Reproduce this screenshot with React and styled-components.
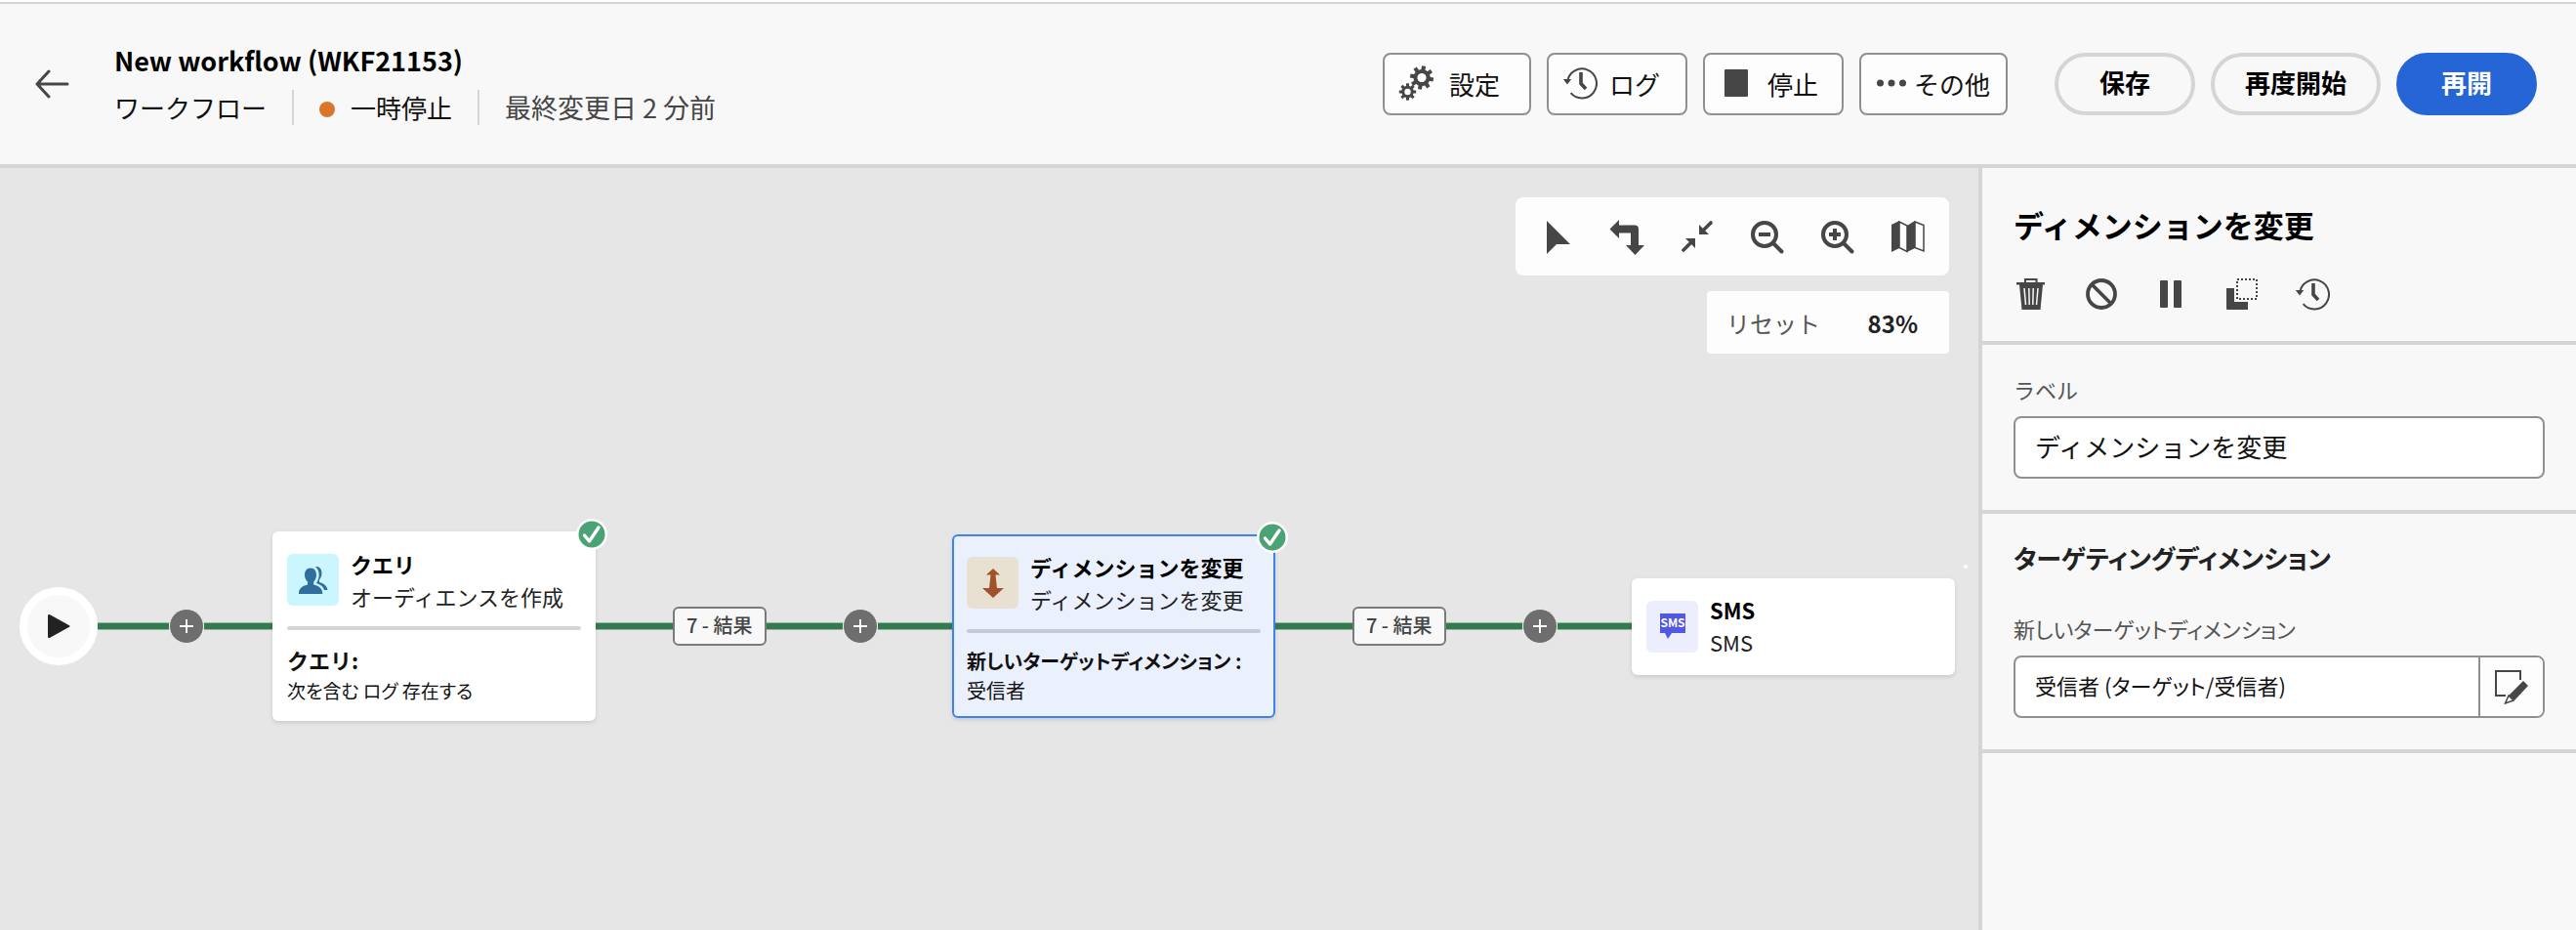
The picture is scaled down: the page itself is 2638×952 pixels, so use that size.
import React from 'react';
import styled, { createGlobalStyle, css } from 'styled-components';

const ink = '#464646';

const GlobalStyle = createGlobalStyle`
  *, *::before, *::after { box-sizing: border-box; }
  html, body, #root { height: 100%; }
  body {
    margin: 0;
    background: #e6e6e6;
    color: #000;
    font-family: 'Noto Sans CJK JP', 'Noto Sans', sans-serif;
    font-size: 26px;
  }
  button, input { font: inherit; color: inherit; }
  h1, h2, h3, p { margin: 0; }
  svg { display: block; flex: none; }
`;

const Page = styled.div`
  min-height: 100%;
  display: flex;
  flex-direction: column;
  border-top: 2px solid #fff;
`;

const Header = styled.header`
  display: flex;
  align-items: center;
  height: 170px;
  padding: 0 40px 0 36px;
  background: #f8f8f8;
  border-top: 2px solid #d5d5d5;
  border-bottom: 4px solid #d5d5d5;
`;

const IconButton = styled.button`
  display: flex;
  align-items: center;
  justify-content: center;
  width: 36px;
  height: 36px;
  padding: 0;
  border: 0;
  background: none;
  color: ${ink};
  cursor: pointer;
`;

const Heading = styled.div`
  flex: 1;
  min-width: 0;
  margin-left: 45px;
`;

const Title = styled.h1`
  font-size: 27px;
  font-weight: 700;
  line-height: 48px;
  white-space: nowrap;
`;

const Meta = styled.div`
  display: flex;
  align-items: center;
  height: 48px;
  line-height: 36px;
  white-space: nowrap;
`;

const MetaItem = styled.span`
  display: flex;
  align-items: center;
  gap: 16px;
  font-size: ${(p) => (p.$muted ? 27 : 26)}px;
  color: ${(p) => (p.$muted ? ink : '#111')};

  & + & {
    margin-left: 26px;
    padding-left: 26px;
    border-left: 2px solid #d5d5d5;
  }
`;

const StatusDot = styled.span`
  width: 16px;
  height: 16px;
  margin-top: 4px;
  border-radius: 50%;
  background: #da762b;
`;

const Actions = styled.div`
  display: flex;
  gap: 16px;
`;

const ToolButton = styled.button`
  display: flex;
  align-items: center;
  gap: ${(p) => p.$gap || 16}px;
  height: 64px;
  padding: 0 ${(p) => p.$end || 30}px 2px ${(p) => p.$start || 14}px;
  border: 2px solid #909090;
  border-radius: 8px;
  background: #fdfdfd;
  color: #111;
  white-space: nowrap;

  svg { color: ${ink}; }
`;

const PillButton = styled.button`
  height: 64px;
  padding: 0 ${(p) => p.$pad || 42}px 6px;
  border: 4px solid ${(p) => (p.$primary ? '#2565d6' : '#d5d5d5')};
  border-radius: 32px;
  background: ${(p) => (p.$primary ? '#2565d6' : '#f8f8f8')};
  color: ${(p) => (p.$primary ? '#fff' : '#000')};
  font-weight: 700;
  white-space: nowrap;

  ${(p) => p.$first && css`margin-left: 32px;`}
`;

const Body = styled.div`
  flex: 1;
  display: flex;
`;

const Canvas = styled.main`
  flex: 1;
  min-width: 0;
  display: flex;
  flex-direction: column;
  padding-top: 30px;
`;

const Controls = styled.div`
  display: flex;
  flex-direction: column;
  align-items: flex-end;
  gap: 16px;
  padding-right: 30px;
`;

const Toolbar = styled.div`
  display: flex;
  align-items: center;
  gap: 36px;
  height: 80px;
  padding: 2px 24px 0;
  border-radius: 8px;
  background: #fdfdfd;
`;

const ZoomBox = styled.div`
  display: flex;
  align-items: center;
  justify-content: space-between;
  width: 248px;
  height: 64px;
  padding: 0 32px 0 20px;
  border-radius: 4px;
  background: #fdfdfd;
  color: #222;
`;

const ResetButton = styled.button`
  padding: 0;
  border: 0;
  background: none;
  color: #555;
  font-size: 24px;
`;

const ZoomValue = styled.strong`
  font-size: 24px;
`;

const Flow = styled.div`
  display: flex;
  align-items: center;
  height: 196px;
  margin-top: 181px;
  padding-left: 20px;
`;

const StartNode = styled.div`
  flex: none;
  display: flex;
  align-items: center;
  justify-content: center;
  width: 80px;
  height: 80px;
  border: 8px solid #fff;
  border-radius: 50%;
  background: #f8f8f8;
  color: #222;
`;

const EdgeRow = styled.div`
  flex: none;
  display: flex;
  align-items: center;
  width: ${(p) => p.$width}px;
`;

const Line = styled.span`
  flex: ${(p) => p.$grow || 76};
  height: 8px;
  background: #337a4f;
  border: solid #8fb8a0;
  border-width: 1px 0;
`;

const EdgeLabel = styled.span`
  flex: none;
  display: flex;
  align-items: center;
  justify-content: center;
  width: 96px;
  height: 40px;
  padding-bottom: 2px;
  border: 2px solid #7a7a7a;
  border-radius: 6px;
  background: #f8f8f8;
  color: #444;
  font-size: 20px;
  font-weight: 500;
  line-height: 28px;
  white-space: nowrap;
`;

const AddButton = styled.button`
  flex: none;
  display: flex;
  align-items: center;
  justify-content: center;
  width: 36px;
  height: 36px;
  padding: 0;
  border: 1px solid #eee;
  border-radius: 50%;
  background: #6e6e6e;
  color: #fff;
`;

const CardHead = styled.div`
  display: flex;
  align-items: center;
  gap: 12px;
`;

const CardIcon = styled.div`
  flex: none;
  display: flex;
  align-items: center;
  justify-content: center;
  width: 53px;
  height: 53px;
  border-radius: 6px;
  background: ${(p) => p.$bg};
`;

const CardTitles = styled.div`
  height: 53px;
  margin-top: -13px;
  font-size: 22px;
  line-height: 33px;
  white-space: nowrap;
  color: #222;

  h3 { font-size: 22px; color: #000; }
`;

const CardRule = styled.hr`
  height: 4px;
  margin: 21px 0 14px;
  border: 0;
  border-radius: 2px;
  background: #d5d5d5;
`;

const CardDetail = styled.p`
  font-size: ${(p) => p.$size || 20}px;
  font-weight: ${(p) => (p.$bold ? 700 : 400)};
  font-feature-settings: ${(p) => (p.$tight ? "'palt'" : 'normal')};
  line-height: 32px;
  color: #111;
  white-space: nowrap;
`;

const Badge = styled.span`
  position: absolute;
  top: -13px;
  right: -12px;
`;

const EmptyBadge = styled.span`
  position: absolute;
  top: -14px;
  right: -13px;
  width: 4px;
  height: 4px;
  border-radius: 50%;
  background: #fff;
`;

const Card = styled.article`
  position: relative;
  flex: none;
  width: 331px;
  padding: ${(p) => (p.$compact ? '23px 15px' : '23px 15px 15px')};
  border-radius: 6px;
  background: #fff;
  box-shadow: 0 2px 4px rgba(0, 0, 0, 0.12);

  ${(p) => p.$selected && css`
    padding: 21px 13px 11px;
    border: 2px solid #3f82ee;
    background: #ebf0fd;

    ${CardRule} { background: #c5cad8; }
    ${CardDetail} { line-height: 30px; }
    ${Badge} { top: -15px; right: -15px; }
  `}
`;

const Side = styled.aside`
  flex: none;
  width: 612px;
  border-left: 4px solid #d5d5d5;
  background: #f8f8f8;
`;

const Section = styled.section`
  padding: ${(p) => p.$pad};
  border-bottom: 4px solid #d5d5d5;
`;

const SideTitle = styled.h2`
  font-size: 31px;
  line-height: 44px;
  white-space: nowrap;
`;

const SideActions = styled.div`
  display: flex;
  gap: 36px;
  margin-top: 31px;
`;

const SectionTitle = styled.h3`
  margin-bottom: 36px;
  font-size: 26px;
  font-feature-settings: 'palt';
  line-height: 40px;
  color: #222;
`;

const FieldLabel = styled.label`
  display: block;
  margin-bottom: 12px;
  font-size: 22px;
  line-height: 32px;
  color: #555;
  font-feature-settings: ${(p) => (p.$tight ? "'palt'" : 'normal')};
`;

const Field = styled.div`
  display: flex;
  height: 64px;
  border: 2px solid #909090;
  border-radius: 8px;
  background: #fff;
  overflow: hidden;
`;

const TextInput = styled.input`
  flex: 1;
  min-width: 0;
  padding: 0 20px 4px;
  border: 0;
  outline: 0;
  background: none;
  color: #111;
  font-size: ${(p) => (p.$tight ? 22 : 26)}px;
  font-feature-settings: ${(p) => (p.$tight ? "'palt'" : 'normal')};
`;

const FieldButton = styled.button`
  flex: none;
  display: flex;
  align-items: center;
  justify-content: center;
  width: 66px;
  padding: 0;
  border: 0;
  border-left: 2px solid #909090;
  background: #fdfdfd;
  color: ${ink};
`;

const Svg = ({ size = 36, children, ...rest }) => (
  <svg width={size} height={size} viewBox="0 0 36 36" fill="currentColor" aria-hidden="true" {...rest}>
    {children}
  </svg>
);

const Gear = ({ cx, cy, r, hole, tooth, turn = 0 }) => (
  <g transform={`translate(${cx} ${cy}) rotate(${turn})`}>
    {[0, 45, 90, 135, 180, 225, 270, 315].map((a) => (
      <rect key={a} x={-tooth / 2} y={-r * 1.4} width={tooth} height={r * 0.7} transform={`rotate(${a})`} />
    ))}
    <circle r={(r + hole) / 2} fill="none" stroke="currentColor" strokeWidth={r - hole} />
  </g>
);

const GearsIcon = () => (
  <Svg>
    <Gear cx={24} cy={12.5} r={8.6} hole={4.6} tooth={4} turn={10} />
    <Gear cx={9.5} cy={27} r={6.2} hole={3.2} tooth={3} />
  </Svg>
);

const HistoryIcon = () => (
  <Svg>
    <path d="M5.2 16A15 15 0 1 1 8.6 28.2" fill="none" stroke="currentColor" strokeWidth="2" />
    <path d="M0.8 14h8.4L5 19.500z" />
    <path d="M19 7v11.500l5 5.500" fill="none" stroke="currentColor" strokeWidth="3.600" />
  </Svg>
);

const StopIcon = () => (
  <svg width="24" height="28" viewBox="0 0 24 28" fill="currentColor" aria-hidden="true">
    <rect width="24" height="28" rx="1" />
  </svg>
);

const DotsIcon = () => (
  <svg width="30" height="8" viewBox="0 0 30 8" fill="currentColor" aria-hidden="true">
    <circle cx="3.5" cy="4" r="3.5" />
    <circle cx="15" cy="4" r="3.5" />
    <circle cx="26.5" cy="4" r="3.5" />
  </svg>
);

const BackIcon = () => (
  <Svg fill="none" stroke="currentColor" strokeWidth="3" strokeLinecap="round" strokeLinejoin="round">
    <path d="M33 18H2M14 5L2 18l12 13" />
  </Svg>
);

const CursorIcon = () => (
  <Svg><path d="M8 1v34l10-10h14z" /></Svg>
);

const TurnIcon = () => (
  <Svg><path d="M0.5 9.5L10 0v5.5h16a4 4 0 0 1 4 4V26h6l-9.500 10L17 26h5V13.500H10V19z" /></Svg>
);

const CollapseIcon = () => (
  <Svg>
    <path d="M20 5v10h10z" /><path d="M24 11l8-8" stroke="currentColor" strokeWidth="3.600" strokeLinecap="round" />
    <path d="M16 29V19H6z" /><path d="M12 23l-8 8" stroke="currentColor" strokeWidth="3.600" strokeLinecap="round" />
  </Svg>
);

const ZoomIcon = ({ plus }) => (
  <Svg fill="none" stroke="currentColor" strokeWidth="4">
    <circle cx="15" cy="15" r="12" />
    <path d="M24 24l8.500 8.500" strokeLinecap="round" />
    <path d={plus ? 'M9 15h12M15 9v12' : 'M9 15h12'} />
  </Svg>
);

const MapIcon = () => (
  <Svg>
    <path d="M1 5l8-4v28l-8 4zM17 6l8-5v28l-8 4z" />
    <path d="M9 2l8 4v26.500l-8-4zM25 2l9 3.500v26.500l-9-3.500z" fill="none" stroke="currentColor" strokeWidth="1.500" />
  </Svg>
);

const TrashIcon = () => (
  <Svg>
    <path d="M3 6h29v2.500h-2L27.500 34H8.500L6 8.500H3z" />
    <path d="M12 6V3h11.500v3" fill="none" stroke="currentColor" strokeWidth="2" />
    <path d="M11 12l1.500 17M15.800 12l.4 17M20.200 12l-.4 17M25 12l-1.500 17" stroke="#f8f8f8" strokeWidth="1.500" />
  </Svg>
);

const BanIcon = () => (
  <Svg fill="none" stroke="currentColor" strokeWidth="3.800">
    <circle cx="18" cy="18" r="14" />
    <path d="M8.500 8.500l19 19" />
  </Svg>
);

const PauseIcon = () => (
  <Svg><rect x="6" y="4" width="8" height="28" rx="1" /><rect x="20" y="4" width="8" height="28" rx="1" /></Svg>
);

const CopyIcon = () => (
  <Svg>
    <path d="M2 12h8v14h14v8H3a1 1 0 0 1-1-1z" />
    <rect x="13" y="3" width="20" height="20" fill="none" stroke="currentColor" strokeWidth="2" strokeDasharray="2 2" />
  </Svg>
);

const EditIcon = () => (
  <Svg>
    <path d="M12 27H2V2h25v9" fill="none" stroke="currentColor" strokeWidth="2" />
    <path d="M30 12l5 5-14 15-6-5z" />
    <path d="M15 27l-3.500 8 8.500-3z" fill="none" stroke="currentColor" strokeWidth="1.500" />
  </Svg>
);

const PlayIcon = () => (
  <svg width="24" height="26" viewBox="0 0 24 26" fill="currentColor" aria-hidden="true">
    <path d="M1 2.500C1 1 2 .5 3.200 1.200L23 12.200q1.200.8 0 1.600L3.200 24.800C2 25.500 1 25 1 23.500z" />
  </svg>
);

const PlusIcon = () => (
  <svg width="14" height="14" viewBox="0 0 14 14" fill="none" stroke="currentColor" strokeWidth="2" aria-hidden="true">
    <path d="M0 7h14M7 0v14" />
  </svg>
);

const CheckIcon = () => (
  <svg width="32" height="32" viewBox="0 0 32 32" aria-hidden="true">
    <circle cx="16" cy="16" r="16" fill="#fff" />
    <circle cx="16" cy="16" r="13.500" fill="#4ba274" />
    <path d="M8.500 17l5 6 9.500-14" fill="none" stroke="#fff" strokeWidth="3.400" strokeLinecap="round" strokeLinejoin="round" />
  </svg>
);

const PeopleIcon = () => (
  <svg width="30" height="28" viewBox="0 0 30 28" fill="#2f6e9e" aria-hidden="true">
    <path d="M12 1.500c3.800 0 6 2.800 6 7 0 3-1.200 5.500-2.800 7v3c4.500 1 9 3.500 9 8.500v1H0v-1c0-5 4.500-7.500 9-8.500v-3c-1.700-1.500-3-4-3-7 0-4.200 2.300-7 6-7z" />
    <path d="M17 0c4.500-.5 6.500 3 6.500 7 0 3-1.200 5-2.500 6.500V16c4 1 8 3.500 8.500 8H26c-.7-3.500-3.500-5.500-8-7 1.800-3 2.700-5.500 2.700-8.500C20.700 5 19.500 2 17 0z" />
  </svg>
);

const DimensionIcon = () => (
  <svg width="24" height="30" viewBox="0 0 24 30" fill="#a0522d" aria-hidden="true">
    <path d="M12 0l7 6.500h-4.500l1.500 13.500h7L12 30 1 20h7L9.500 6.500H5z" />
  </svg>
);

const SmsIcon = () => (
  <svg width="28" height="28" viewBox="0 0 28 28" aria-hidden="true">
    <path d="M1 1h26v20H13l-4 6-3-6H1z" fill="#5258e0" />
    <text x="14" y="15" textAnchor="middle" fill="#fff" fontSize="12" fontWeight="700">SMS</text>
  </svg>
);

const Edge = ({ label }) => (
  <EdgeRow $width={label ? 365 : 179}>
    <Line $grow={79} />
    {label && (
      <>
        <EdgeLabel>{label}</EdgeLabel>
        <Line $grow={79} />
      </>
    )}
    <AddButton aria-label="追加"><PlusIcon /></AddButton>
    <Line />
  </EdgeRow>
);

const ActivityCard = ({ icon, iconBg, title, subtitle, selected, done, children }) => (
  <Card $selected={selected} $compact={!children}>
    <CardHead>
      <CardIcon $bg={iconBg}>{icon}</CardIcon>
      <CardTitles>
        <h3>{title}</h3>
        <p>{subtitle}</p>
      </CardTitles>
    </CardHead>
    {children && <CardRule />}
    {children}
    {done ? <Badge><CheckIcon /></Badge> : <EmptyBadge />}
  </Card>
);

export default function App() {
  return (
    <>
      <GlobalStyle />
      <Page>
        <Header>
          <IconButton aria-label="戻る"><BackIcon /></IconButton>
          <Heading>
            <Title>New workflow (WKF21153)</Title>
            <Meta>
              <MetaItem>ワークフロー</MetaItem>
              <MetaItem><StatusDot />一時停止</MetaItem>
              <MetaItem $muted>最終変更日 2 分前</MetaItem>
            </Meta>
          </Heading>
          <Actions>
            <ToolButton><GearsIcon />設定</ToolButton>
            <ToolButton $gap={12} $end={26}><HistoryIcon />ログ</ToolButton>
            <ToolButton $start={20} $gap={20} $end={24}><StopIcon />停止</ToolButton>
            <ToolButton $start={16} $end={16} $gap={8}><DotsIcon />その他</ToolButton>
            <PillButton $first>保存</PillButton>
            <PillButton $pad={31}>再度開始</PillButton>
            <PillButton $primary>再開</PillButton>
          </Actions>
        </Header>
        <Body>
          <Canvas>
            <Controls>
              <Toolbar>
                <IconButton aria-label="選択"><CursorIcon /></IconButton>
                <IconButton aria-label="向きを変更"><TurnIcon /></IconButton>
                <IconButton aria-label="画面に合わせる"><CollapseIcon /></IconButton>
                <IconButton aria-label="縮小"><ZoomIcon /></IconButton>
                <IconButton aria-label="拡大"><ZoomIcon plus /></IconButton>
                <IconButton aria-label="マップ"><MapIcon /></IconButton>
              </Toolbar>
              <ZoomBox>
                <ResetButton>リセット</ResetButton>
                <ZoomValue>83%</ZoomValue>
              </ZoomBox>
            </Controls>
            <Flow>
              <StartNode><PlayIcon /></StartNode>
              <Edge />
              <ActivityCard icon={<PeopleIcon />} iconBg="#cbf6ff" title="クエリ" subtitle="オーディエンスを作成" done>
                <CardDetail $bold $size={22}>クエリ:</CardDetail>
                <CardDetail $tight $size={19}>次を含む ログ 存在する</CardDetail>
              </ActivityCard>
              <Edge label="7 - 結果" />
              <ActivityCard icon={<DimensionIcon />} iconBg="#e8e0d0" title="ディメンションを変更" subtitle="ディメンションを変更" selected done>
                <CardDetail $bold $tight>新しいターゲットディメンション :</CardDetail>
                <CardDetail $tight>受信者</CardDetail>
              </ActivityCard>
              <Edge label="7 - 結果" />
              <ActivityCard icon={<SmsIcon />} iconBg="#eceefe" title="SMS" subtitle="SMS" />
            </Flow>
          </Canvas>
          <Side>
            <Section $pad="36px 32px 30px">
              <SideTitle>ディメンションを変更</SideTitle>
              <SideActions>
                <IconButton aria-label="削除"><TrashIcon /></IconButton>
                <IconButton aria-label="無効化"><BanIcon /></IconButton>
                <IconButton aria-label="一時停止"><PauseIcon /></IconButton>
                <IconButton aria-label="コピー"><CopyIcon /></IconButton>
                <IconButton aria-label="履歴"><HistoryIcon /></IconButton>
              </SideActions>
            </Section>
            <Section $pad="29px 32px 32px">
              <FieldLabel htmlFor="label">ラベル</FieldLabel>
              <Field><TextInput id="label" defaultValue="ディメンションを変更" /></Field>
            </Section>
            <Section $pad="25px 32px 32px">
              <SectionTitle>ターゲティングディメンション</SectionTitle>
              <FieldLabel $tight htmlFor="dimension">新しいターゲットディメンション</FieldLabel>
              <Field>
                <TextInput $tight id="dimension" defaultValue="受信者 (ターゲット/受信者)" />
                <FieldButton aria-label="編集"><EditIcon /></FieldButton>
              </Field>
            </Section>
          </Side>
        </Body>
      </Page>
    </>
  );
}
